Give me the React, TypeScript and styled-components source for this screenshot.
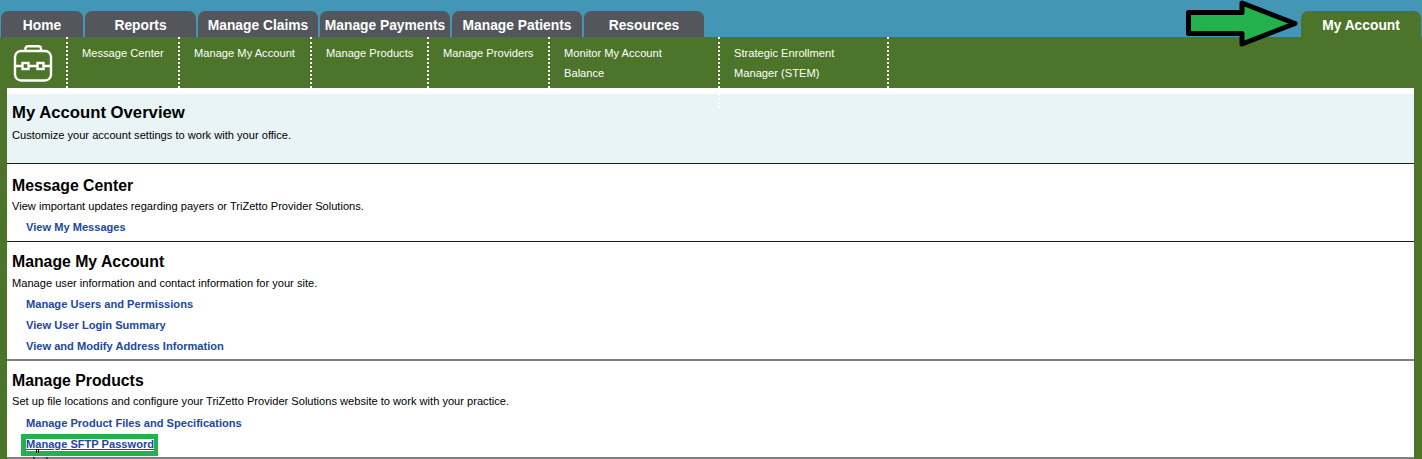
import React from "react";
import styled, { createGlobalStyle } from "styled-components";

const tabs = [
    { label: "Home", width: 82 },
    { label: "Reports", width: 111 },
    { label: "Manage Claims", width: 120 },
    { label: "Manage Payments", width: 130 },
    { label: "Manage Patients", width: 130 },
    { label: "Resources", width: 120 },
];

const subItems = [
    { lines: ["Message Center"], width: 112 },
    { lines: ["Manage My Account"], width: 132 },
    { lines: ["Manage Products"], width: 117 },
    { lines: ["Manage Providers"], width: 121 },
    { lines: ["Monitor My Account", "Balance"], width: 170 },
    { lines: ["Strategic Enrollment", "Manager (STEM)"], width: 171 },
];

const sections = [
    {
        title: "Message Center",
        text: "View important updates regarding payers or TriZetto Provider Solutions.",
        links: ["View My Messages"],
        height: 78,
        rule: "1px solid #1c1c1c",
        top: 13,
        gap: 5,
    },
    {
        title: "Manage My Account",
        text: "Manage user information and contact information for your site.",
        links: [
            "Manage Users and Permissions",
            "View User Login Summary",
            "View and Modify Address Information",
        ],
        height: 118,
        rule: "1px solid #1c1c1c",
        top: 11,
        gap: 6,
    },
];

function App() {
    return (
        <Page>
            <GlobalStyle />
            <TopBar>
                <TabRow>
                    {tabs.map((tab) => (
                        <Tab key={tab.label} $width={tab.width}>
                            {tab.label}
                        </Tab>
                    ))}
                </TabRow>
                <ActiveTab>My Account</ActiveTab>
                <ArrowMark viewBox="0 0 116 48" aria-hidden="true">
                    <path
                        d="M3.5 12.5H57V3L110 23.5L57 44V33.5H3.5Z"
                        fill="#22b14c"
                        stroke="#000"
                        strokeWidth="5"
                        strokeLinejoin="round"
                    />
                </ArrowMark>
            </TopBar>
            <SubNav>
                <ToolIcon viewBox="0 0 40 38" aria-hidden="true">
                    <g fill="none" stroke="#fff" strokeWidth="2.4">
                        <rect x="2" y="6" width="36" height="29.5" rx="6" />
                        <path d="M12.5 6V3.5Q12.5 1.2 15 1.2H25.5Q28 1.2 28 3.5V6" />
                        <path d="M2 21H9.5M15.5 21H24.5M30.5 21H38" />
                        <rect x="9.5" y="18" width="6" height="6" />
                        <rect x="24.5" y="18" width="6" height="6" />
                    </g>
                </ToolIcon>
                {subItems.map((item) => (
                    <SubItem key={item.lines[0]} $width={item.width}>
                        {item.lines.map((line) => (
                            <div key={line}>{line}</div>
                        ))}
                    </SubItem>
                ))}
            </SubNav>
            <Frame>
                <Content>
                    <Overview>
                        <h1>My Account Overview</h1>
                        <p>Customize your account settings to work with your office.</p>
                        <DottedTail />
                    </Overview>
                    {sections.map((section) => (
                        <Section
                            key={section.title}
                            $height={section.height}
                            $rule={section.rule}
                            $top={section.top}
                            $gap={section.gap}
                        >
                            <h2>{section.title}</h2>
                            <p>{section.text}</p>
                            <LinkList $top={7}>
                                {section.links.map((link) => (
                                    <li key={link}>
                                        <a href="#">{link}</a>
                                    </li>
                                ))}
                            </LinkList>
                        </Section>
                    ))}
                    <Section $height={98} $rule="2px solid #808080" $top={11} $gap={5}>
                        <h2>Manage Products</h2>
                        <p>
                            Set up file locations and configure your TriZetto Provider
                            Solutions website to work with your practice.
                        </p>
                        <LinkList $top={8}>
                            <li>
                                <a href="#">Manage Product Files and Specifications</a>
                            </li>
                            <li>
                                <Highlight>
                                    <UnderlinedLink href="#">
                                        Manage SFTP Password
                                    </UnderlinedLink>
                                </Highlight>
                            </li>
                        </LinkList>
                        <Cursor viewBox="0 0 16 12" aria-hidden="true">
                            <path
                                d="M3.5 1V5M5.5 1V5M0 9L3 12M14 9V12"
                                fill="none"
                                stroke="#000"
                                strokeWidth="1"
                            />
                        </Cursor>
                    </Section>
                    <BottomRule />
                </Content>
            </Frame>
        </Page>
    );
}

const GlobalStyle = createGlobalStyle`
    html, body {
        margin: 0;
        padding: 0;
        background: #fff;
    }

    body {
        font-family: "Liberation Sans", Arial, sans-serif;
    }
`;

const Page = styled.div`
    width: 1422px;
    height: 459px;
    overflow: hidden;
    background: #4c742a;
`;

const TopBar = styled.div`
    position: relative;
    height: 37px;
    padding: 11px 1px 0;
    box-sizing: border-box;
    display: flex;
    justify-content: space-between;
    background: #4396b6;
`;

const TabRow = styled.div`
    display: flex;
    gap: 2px;
`;

const Tab = styled.div<{ $width: number }>`
    width: ${(p) => p.$width}px;
    height: 26px;
    border-radius: 7px 7px 0 0;
    background: #54565b;
    color: #fff;
    font-size: 13.8px;
    font-weight: bold;
    line-height: 29px;
    text-align: center;
    white-space: nowrap;
`;

const ActiveTab = styled(Tab).attrs({ $width: 120 })`
    background: #4c742a;
`;

const ArrowMark = styled.svg`
    position: absolute;
    left: 1185px;
    top: 0;
    width: 116px;
    height: 48px;
`;

const SubNav = styled.nav`
    height: 51px;
    display: flex;
    background: #4c742a;
`;

const ToolIcon = styled.svg`
    width: 40px;
    height: 38px;
    margin: 8px 13px 0 13px;
    flex: none;
`;

const SubItem = styled.div<{ $width: number }>`
    width: ${(p) => p.$width}px;
    flex: none;
    box-sizing: border-box;
    padding: 6px 0 0 14px;
    border-left: 2px dotted #fff;
    color: #fff;
    font-size: 11.15px;
    line-height: 20px;

    &:last-of-type {
        border-right: 2px dotted #fff;
    }
`;

const Frame = styled.div`
    height: 371px;
    padding: 0 8px 0 7px;
`;

const Content = styled.main`
    height: 100%;
    box-sizing: border-box;
    background: #fff;
    padding-top: 6px;
    color: #000;
`;

const Overview = styled.header`
    position: relative;
    height: 69px;
    padding: 10px 0 0 5px;
    box-sizing: border-box;
    background: #e8f4f6;

    h1 {
        margin: 0;
        font-size: 16.7px;
        line-height: 18px;
    }

    p {
        margin: 6px 0 0;
        font-size: 11.1px;
        line-height: 14px;
    }
`;

const DottedTail = styled.span`
    position: absolute;
    left: 711px;
    top: 0;
    height: 14px;
    border-left: 2px dotted #fff;
`;

const Section = styled.section<{
    $height: number;
    $rule: string;
    $top: number;
    $gap: number;
}>`
    position: relative;
    height: ${(p) => p.$height}px;
    box-sizing: border-box;
    padding: ${(p) => p.$top}px 0 0 5px;
    border-top: ${(p) => p.$rule};

    h2 {
        margin: 0;
        font-size: 15.8px;
        line-height: 17px;
    }

    p {
        margin: ${(p) => p.$gap}px 0 0;
        font-size: 11.1px;
        line-height: 14px;
    }
`;

const LinkList = styled.ul<{ $top: number }>`
    list-style: none;
    margin: ${(p) => p.$top}px 0 0;
    padding: 0 0 0 14px;

    li {
        height: 21px;
        font-size: 11.1px;
        font-weight: bold;
        line-height: 15px;
    }

    a {
        color: #22489c;
        text-decoration: none;
    }
`;

const Highlight = styled.span`
    display: inline-block;
    margin: -6px 0 0 -5px;
    padding: 5px 4px 5px 5px;
    background: #22b14c;
`;

const UnderlinedLink = styled.a`
    display: block;
    height: 12px;
    line-height: 10px;
    background: #fff;

    && {
        text-decoration: underline;
    }
`;

const Cursor = styled.svg`
    position: absolute;
    left: 26px;
    top: 87px;
    width: 16px;
    height: 12px;
`;

const BottomRule = styled.div`
    border-top: 2px solid #808080;
`;

export default App;
